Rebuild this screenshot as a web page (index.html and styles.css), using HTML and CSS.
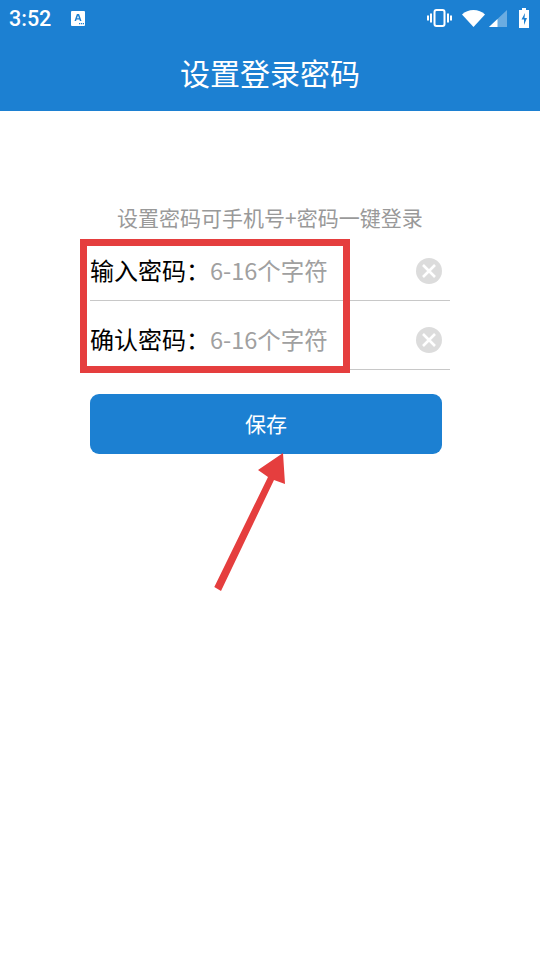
FILE: index.html
```html
<!DOCTYPE html>
<html lang="zh-CN">
<head>
    <meta charset="UTF-8">
    <meta name="viewport" content="width=device-width, initial-scale=1.0">
    <title>设置登录密码</title>
    <link rel="stylesheet" href="styles.css">
</head>
<body>
    <header class="topbar">
        <div class="statusbar">
            <div class="status-left">
                <span class="clock">3:52</span>
                <svg class="icon-a" width="14" height="15" viewBox="0 0 14 15">
                    <path fill="#fff" d="M1 0h12a1 1 0 0 1 1 1v13a1 1 0 0 1-1 1H1a1 1 0 0 1-1-1V1a1 1 0 0 1 1-1z"/>
                    <path fill="#1c80d2" d="M5.900 3h2.200l2.400 7H8.900l-.4-1.400h-3L5.100 10H3.500zM6 7.300h2L7 4.600zM8 12h1.300v1.200H8zM10 12h1.300v1.200H10zM12 12h1v1.200h-1z"/>
                </svg>
            </div>
            <div class="status-right">
                <svg width="25" height="18" viewBox="0 0 25 18" fill="none" stroke="#fff">
                    <rect x="7.500" y="1" width="10" height="16" rx="2" stroke-width="2"/>
                    <path stroke-width="2" d="M4 4.500v9M1 6.500v5M21 4.500v9M24 6.500v5"/>
                </svg>
                <svg class="icon-wifi" width="23" height="17" viewBox="0 0 23 17">
                    <path fill="#fff" d="M0 4.500C3 1.700 7 0 11.500 0S20 1.700 23 4.500L11.500 17z"/>
                </svg>
                <svg class="icon-signal" width="18" height="17" viewBox="0 0 18 17">
                    <path fill="#fff" fill-opacity=".35" d="M18 0v17H0z"/>
                    <path fill="#fff" d="M8.500 9v8H0z"/>
                </svg>
                <svg class="icon-battery" width="10" height="20" viewBox="0 0 10 20">
                    <path fill="#fff" d="M3 0h4v2h3v18H0V2h3z"/>
                    <path fill="#1c80d2" d="M6 5 2.500 11.500H5V17l3-7H5.500z"/>
                </svg>
            </div>
        </div>
        <h1 class="title">设置登录密码</h1>
    </header>

    <main class="content">
        <p class="hint">设置密码可手机号+密码一键登录</p>

        <div class="field">
            <span class="field-label">输入密码：</span>
            <span class="field-holder">6-16个字符</span>
            <span class="clear-btn">
                <svg width="26" height="26" viewBox="0 0 26 26">
                    <circle cx="13" cy="13" r="13" fill="#dcdcdc"/>
                    <path d="M7 7l12 12M19 7L7 19" stroke="#fff" stroke-width="2.600"/>
                </svg>
            </span>
        </div>
        <div class="field">
            <span class="field-label">确认密码：</span>
            <span class="field-holder">6-16个字符</span>
            <span class="clear-btn">
                <svg width="26" height="26" viewBox="0 0 26 26">
                    <circle cx="13" cy="13" r="13" fill="#dcdcdc"/>
                    <path d="M7 7l12 12M19 7L7 19" stroke="#fff" stroke-width="2.600"/>
                </svg>
            </span>
        </div>

        <button class="save-btn">保存</button>
    </main>

    <!-- red annotations on top of the screenshot -->
    <div class="mark-box"></div>
    <svg class="mark-arrow" width="80" height="145" viewBox="0 0 80 145">
        <path fill="#e53e3e" d="M73 0 75 31 64 27 11 138 4.300 134 58 24 48 17z"/>
    </svg>
</body>
</html>
```

FILE: styles.css
```css
body {
    margin: 0;
    background: #fff;
    font-family: "Noto Sans CJK SC", "Roboto", sans-serif;
    min-height: 960px;
    position: relative;
}
.topbar {
    background: #1c80d2;
    height: 111px;
    color: #fff;
}
.statusbar {
    height: 36px;
    display: flex;
    justify-content: space-between;
    align-items: center;
    padding: 0 11px 0 9px;
}
.status-left {
    display: flex;
    align-items: center;
}
.clock {
    font-family: "Roboto", sans-serif;
    font-size: 21.5px;
    font-weight: 500;
    width: 62px;
}
.status-right {
    display: flex;
    align-items: center;
    gap: 10px;
}
.icon-signal {
    margin-left: -6px;
}
.icon-battery {
    margin-left: 2px;
}
.title {
    margin: 0;
    text-align: center;
    font-size: 30px;
    font-weight: 400;
    line-height: 72px;
}
.content {
    padding: 93px 90px 0;
}
.hint {
    margin: 0 0 2px 27px;
    font-size: 21px;
    line-height: 26px;
    color: #999;
    white-space: nowrap;
}
.field {
    width: 360px;
    height: 69px;
    padding-top: 10px;
    box-sizing: border-box;
    border-bottom: 1px solid #c8c8c8;
    display: flex;
    align-items: center;
}
.field-label {
    font-size: 24px;
    line-height: 30px;
    padding-bottom: 2px;
    color: #000;
    width: 120px;
}
.field-holder {
    font-size: 23.5px;
    line-height: 30px;
    padding-bottom: 2px;
    color: #a0a0a0;
    flex: 1;
}
.clear-btn {
    display: flex;
    margin-right: 8px;
}
.save-btn {
    display: block;
    width: 352px;
    height: 60px;
    margin-top: 24px;
    padding: 0 0 2px;
    border: none;
    border-radius: 9px;
    background: #1c80d2;
    color: #fff;
    font-family: inherit;
    font-size: 21px;
}
.mark-box {
    position: absolute;
    left: 80px;
    top: 239px;
    width: 256px;
    height: 120px;
    border: 7px solid #e53e3e;
}
.mark-arrow {
    position: absolute;
    left: 210px;
    top: 453px;
}
```
